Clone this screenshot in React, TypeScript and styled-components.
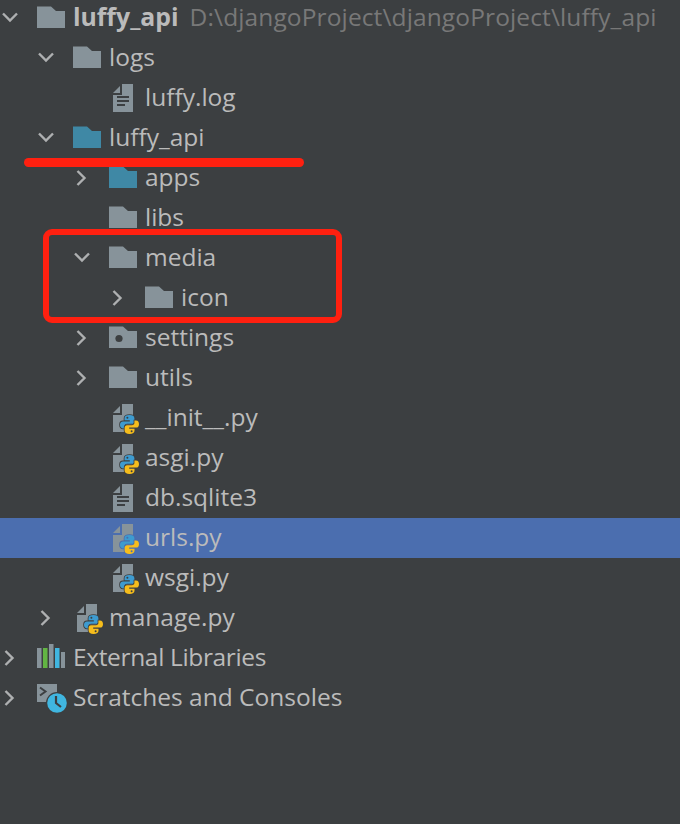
import React from "react";
import styled, { createGlobalStyle } from "styled-components";

const GlobalStyle = createGlobalStyle`
  html, body {
    margin: 0;
    padding: 0;
    background-color: #3c3f41;
  }
`;

const SPanel = styled.div`
  position: relative;
  width: 680px;
  height: 824px;
  overflow: hidden;
  background-color: #3c3f41;
  color: #bbbbbb;
  font-family: "Open Sans", "Noto Sans", sans-serif;
  font-size: 24.5px;
`;

const STree = styled.div`
  display: flex;
  flex-direction: column;
  margin-top: -2px;
`;

const SRow = styled.div<{ $level: number; $selected?: boolean }>`
  display: flex;
  align-items: center;
  height: 40px;
  padding-left: ${(p) => p.$level * 36 + 2}px;
  background-color: ${(p) => (p.$selected ? "#4b6eaf" : "transparent")};
`;

const SChevron = styled.span`
  display: flex;
  flex: none;
  width: 35px;
  height: 16px;
`;

const SIcon = styled.span`
  display: block;
  flex: none;
  width: 28px;
  height: 28px;
  margin-right: 8px;

  svg {
    display: block;
    overflow: visible;
  }
`;

const SName = styled.span<{ $bold?: boolean; $tracking?: number }>`
  padding-bottom: 4px;
  font-size: ${(p) => (p.$bold ? 24.8 : 24.5)}px;
  font-weight: ${(p) => (p.$bold ? 700 : 400)};
  letter-spacing: ${(p) => p.$tracking ?? 0}px;
  white-space: nowrap;
`;

const SPath = styled.span`
  margin-left: 11px;
  padding-bottom: 4px;
  color: #787878;
  letter-spacing: 0.12px;
  white-space: nowrap;
`;

const SUnderline = styled.div`
  position: absolute;
  left: 24px;
  top: 158px;
  width: 280px;
  height: 9px;
  border-radius: 5px;
  background-color: #ff2010;
`;

const SHighlight = styled.div`
  position: absolute;
  left: 43px;
  top: 229px;
  width: 299px;
  height: 94px;
  box-sizing: border-box;
  border: 6px solid #ff2010;
  border-radius: 9px;
`;

type IconKind = "folder" | "source" | "config" | "file" | "python" | "libs" | "scratch";

const FOLDER = "M0 2.5H14L19 7H28V24H0Z";
const SNAKE =
  "M9.5 0C6 0 4.5 1.2 4.5 3.2V5.2H9.8V6.4H3C1 6.4 0 7.8 0 9.8C0 11.8 1 13.4 3 13.4H4.6V11C4.6 9.6 5.6 8.8 7 8.8H12C13.4 8.8 14.4 7.8 14.4 6.4V3.2C14.4 1.2 12.6 0 9.5 0Z";

const Chevron = ({ open }: { open: boolean }) => (
  <svg width="16" height="16" viewBox="0 0 16 16">
    <path
      d={open ? "M1 3.5L8 10.5L15 3.5" : "M3.5 1L10.5 8L3.5 15"}
      fill="none"
      stroke="#aeb0b1"
      strokeWidth="2.4"
    />
  </svg>
);

const FileBody = () => (
  <>
    <path d="M4 9L11 2V9Z" fill="#87939a" />
    <path d="M13 0H24V28H4V11H13Z" fill="#87939a" />
  </>
);

const Python = ({ edge }: { edge: string }) => (
  <g transform="translate(11 11)">
    <path d={SNAKE} fill="#3d9bd0" stroke={edge} strokeWidth="1.6" paintOrder="stroke" />
    <path
      d={SNAKE}
      transform="rotate(180 9.5 9.5)"
      fill="#f6bd1c"
      stroke={edge}
      strokeWidth="1.6"
      paintOrder="stroke"
    />
    <circle cx="7.4" cy="2.8" r="1" fill={edge} />
    <circle cx="11.6" cy="16.2" r="1" fill={edge} />
  </g>
);

const Icon = ({ kind, selected }: { kind: IconKind; selected?: boolean }) => {
  const edge = selected ? "#4b6eaf" : "#3c3f41";
  return (
    <SIcon>
      <svg width="28" height="28" viewBox="0 0 28 28">
        {kind === "folder" && <path d={FOLDER} fill="#87939a" />}
        {kind === "source" && <path d={FOLDER} fill="#3f88a5" />}
        {kind === "config" && (
          <>
            <path d={FOLDER} fill="#87939a" />
            <circle cx="10" cy="14.5" r="3.6" fill="#3c3f41" />
          </>
        )}
        {kind === "file" && (
          <>
            <FileBody />
            <path d="M8 13H20M8 17H20M8 21H16" stroke="#3c3f41" strokeWidth="2" />
          </>
        )}
        {kind === "python" && (
          <>
            <FileBody />
            <Python edge={edge} />
          </>
        )}
        {kind === "libs" && (
          <>
            <rect x="0" y="4" width="4.5" height="20" fill="#87939a" />
            <rect x="6" y="4" width="4.5" height="20" fill="#62b543" />
            <rect x="12" y="0" width="4.5" height="24" fill="#87939a" />
            <rect x="18" y="4" width="4.5" height="20" fill="#40b6e0" />
            <rect x="24" y="8" width="4" height="16" fill="#87939a" />
          </>
        )}
        {kind === "scratch" && (
          <>
            <path d="M0 0H20V18H0Z" fill="#87939a" />
            <path d="M3 3.5L8.5 7.5L3 11.5" fill="none" stroke="#3c3f41" strokeWidth="2" />
            <circle cx="20" cy="19" r="11" fill="#3c3f41" />
            <circle cx="20" cy="19" r="9.8" fill="#40b6e0" />
            <path d="M19 12V19L24 23" fill="none" stroke="#3c3f41" strokeWidth="2.2" />
          </>
        )}
      </svg>
    </SIcon>
  );
};

type Item = {
  name: string;
  level: number;
  icon: IconKind;
  chevron?: "open" | "closed";
  bold?: boolean;
  path?: string;
  selected?: boolean;
  tracking?: number;
};

const items: Item[] = [
  { name: "luffy_api", level: 0, icon: "folder", chevron: "open", bold: true, path: "D:\\djangoProject\\djangoProject\\luffy_api" },
  { name: "logs", level: 1, icon: "folder", chevron: "open" },
  { name: "luffy.log", level: 2, icon: "file" },
  { name: "luffy_api", level: 1, icon: "source", chevron: "open" },
  { name: "apps", level: 2, icon: "source", chevron: "closed" },
  { name: "libs", level: 2, icon: "folder" },
  { name: "media", level: 2, icon: "folder", chevron: "open" },
  { name: "icon", level: 3, icon: "folder", chevron: "closed" },
  { name: "settings", level: 2, icon: "config", chevron: "closed" },
  { name: "utils", level: 2, icon: "folder", chevron: "closed" },
  { name: "__init__.py", level: 2, icon: "python" },
  { name: "asgi.py", level: 2, icon: "python" },
  { name: "db.sqlite3", level: 2, icon: "file" },
  { name: "urls.py", level: 2, icon: "python", selected: true },
  { name: "wsgi.py", level: 2, icon: "python" },
  { name: "manage.py", level: 1, icon: "python", chevron: "closed" },
  { name: "External Libraries", level: 0, icon: "libs", chevron: "closed", tracking: -0.35 },
  { name: "Scratches and Consoles", level: 0, icon: "scratch", chevron: "closed" },
];

const App = () => {
  return (
    <SPanel>
      <GlobalStyle />
      <STree>
        {items.map((item, i) => (
          <SRow key={i} $level={item.level} $selected={item.selected}>
            <SChevron>{item.chevron && <Chevron open={item.chevron === "open"} />}</SChevron>
            <Icon kind={item.icon} selected={item.selected} />
            <SName $bold={item.bold} $tracking={item.tracking}>
              {item.name}
            </SName>
            {item.path && <SPath>{item.path}</SPath>}
          </SRow>
        ))}
      </STree>
      <SUnderline />
      <SHighlight />
    </SPanel>
  );
};

export default App;
